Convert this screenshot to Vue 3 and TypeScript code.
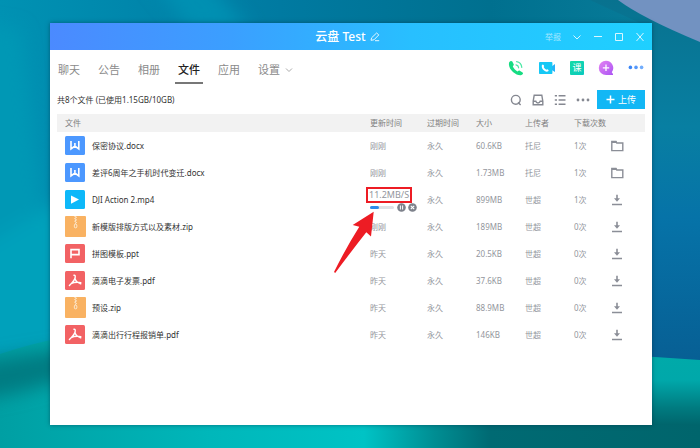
<script setup lang="ts">
import { ref } from 'vue'

type Kind = 'word' | 'video' | 'zip' | 'ppt' | 'pdf'

interface FileRow {
  kind: Kind
  name: string
  updated: string
  size: string
  uploader: string
  downloads: number
  action: 'open' | 'download'
  speed?: string
  progress?: number
}

const tabs = ['聊天', '公告', '相册', '文件', '应用', '设置']
const activeTab = ref('文件')

const files: FileRow[] = [
  { kind: 'word', name: '保密协议.docx', updated: '刚刚', size: '60.6KB', uploader: '托尼', downloads: 1, action: 'open' },
  { kind: 'word', name: '差评6周年之手机时代变迁.docx', updated: '刚刚', size: '1.73MB', uploader: '托尼', downloads: 1, action: 'open' },
  { kind: 'video', name: 'DJI Action 2.mp4', updated: '', size: '899MB', uploader: '世超', downloads: 1, action: 'download', speed: '11.2MB/S', progress: 38 },
  { kind: 'zip', name: '新模版排版方式以及素材.zip', updated: '刚刚', size: '189MB', uploader: '世超', downloads: 0, action: 'download' },
  { kind: 'ppt', name: '拼图模板.ppt', updated: '昨天', size: '20.5KB', uploader: '世超', downloads: 0, action: 'download' },
  { kind: 'pdf', name: '滴滴电子发票.pdf', updated: '昨天', size: '37.6KB', uploader: '世超', downloads: 0, action: 'download' },
  { kind: 'zip', name: '预设.zip', updated: '昨天', size: '88.9MB', uploader: '世超', downloads: 0, action: 'download' },
  { kind: 'pdf', name: '滴滴出行行程报销单.pdf', updated: '昨天', size: '146KB', uploader: '世超', downloads: 0, action: 'download' },
]
</script>

<template>
  <div class="desktop">
    <svg class="wallpaper" viewBox="0 0 700 448" preserveAspectRatio="none" aria-hidden="true">
      <defs>
        <linearGradient id="wall" x1="0" y1="0" x2="1" y2="0">
          <stop offset="0" stop-color="#0092b3" />
          <stop offset="0.18" stop-color="#0087ac" />
          <stop offset="0.4" stop-color="#007aa1" />
          <stop offset="0.7" stop-color="#00708f" />
          <stop offset="1" stop-color="#0a7f9c" />
        </linearGradient>
        <linearGradient id="cloth" x1="0" y1="0" x2="0" y2="1">
          <stop offset="0" stop-color="#08728f" />
          <stop offset="0.35" stop-color="#087fa2" />
          <stop offset="0.6" stop-color="#0673a8" />
          <stop offset="1" stop-color="#075f94" />
        </linearGradient>
        <linearGradient id="floor" x1="0" y1="0" x2="1" y2="0">
          <stop offset="0" stop-color="#009fa3" />
          <stop offset="0.3" stop-color="#00b7ba" />
          <stop offset="0.52" stop-color="#00c3c5" />
          <stop offset="0.62" stop-color="#008e93" />
          <stop offset="0.7" stop-color="#006a73" />
          <stop offset="1" stop-color="#00656c" />
        </linearGradient>
        <linearGradient id="fold" x1="0" y1="0" x2="0" y2="1">
          <stop offset="0" stop-color="#00aaa9" />
          <stop offset="0.35" stop-color="#00a8aa" />
          <stop offset="0.75" stop-color="#007b80" />
          <stop offset="1" stop-color="#00656c" />
        </linearGradient>
        <filter id="soft" x="-50%" y="-50%" width="200%" height="200%">
          <feGaussianBlur stdDeviation="9" />
        </filter>
      </defs>
      <rect width="700" height="448" fill="url(#wall)" />
      <g filter="url(#soft)">
        <path d="M-40 20L20 30L62 370H-40Z" fill="#0098b5" />
        <path d="M150 -20H205L250 30H190Z" fill="#0090b2" />
        <path d="M-40 260L60 200V360H-40Z" fill="#02a1bb" />
      </g>
      <path d="M590 0H625L700 42V362L640 357V23Z" fill="url(#cloth)" />
      <path d="M618 0Q642 18 700 42V0Z" fill="#7292c1" />
      <path d="M0 354Q30 344 60 338V420H700V448H0Z" fill="url(#floor)" />
      <g filter="url(#soft)">
        <path d="M-30 364L80 346V375L20 392L-30 402Z" fill="#007b82" />
      </g>
      <path d="M640 356L700 360V425H640Z" fill="url(#fold)" />
    </svg>

    <main class="window">
      <header class="titlebar">
        <span></span>
        <h1 class="title">
          云盘 Test
          <button class="plain" aria-label="编辑名称">
            <svg width="10" height="10" viewBox="0 0 10 10" fill="none" stroke="#e4f7ff" stroke-width="1">
              <path d="M1 8.3L1.6 5.8L6.6 1L8.8 2.9L4 7.8L1 8.3ZM5 8.7H9.2" />
            </svg>
          </button>
        </h1>
        <div class="controls">
          <button class="plain report">举报</button>
          <button class="plain" aria-label="更多">
            <svg width="10" height="10" viewBox="0 0 10 10"><path d="M1.5 3.5L5 7L8.5 3.5" /></svg>
          </button>
          <button class="plain" aria-label="最小化">
            <svg width="10" height="10" viewBox="0 0 10 10"><path d="M1 4.5H9" /></svg>
          </button>
          <button class="plain" aria-label="最大化">
            <svg width="10" height="10" viewBox="0 0 10 10"><path d="M1.5 1.5H8.5V8.5H1.5Z" /></svg>
          </button>
          <button class="plain" aria-label="关闭">
            <svg width="10" height="10" viewBox="0 0 10 10"><path d="M1.5 1L8.5 9M8.5 1L1.5 9" /></svg>
          </button>
        </div>
      </header>

      <div class="navbar">
        <nav class="tabs">
          <button
            v-for="tab in tabs"
            :key="tab"
            class="plain tab"
            :class="{ active: tab === activeTab }"
            @click="activeTab = tab"
          >
            {{ tab }}
            <svg v-if="tab === '设置'" width="8" height="8" viewBox="0 0 8 8" fill="none" stroke="#aaa">
              <path d="M1 2.5L4 5.5L7 2.5" />
            </svg>
          </button>
        </nav>
        <div class="apps">
          <button class="plain" aria-label="语音通话">
            <svg width="16" height="16" viewBox="0 0 16 16">
              <path d="M1.2 2.2C2.2.7 3.6.5 4.3 1.5L5.7 4.2C6.1 5 5.4 5.6 4.8 6.3C5.4 8.2 7.6 10.7 9.6 11.6C10.4 10.9 11 10.3 11.8 10.8L14.6 12.4C15.6 13.2 14.7 14.6 13.4 15.1C9.2 16.5 -1 9.2 1.2 2.2Z" fill="#16dc82" />
              <path d="M8 4.8Q10.3 5.2 10.6 7.8M8.6 1.6Q13.2 2.2 13.8 7.4" fill="none" stroke="#4be8a5" stroke-width="1.2" stroke-linecap="round" />
            </svg>
          </button>
          <button class="plain" aria-label="视频通话">
            <svg width="18" height="16" viewBox="0 0 18 16">
              <path d="M13 7L17 4V12L13 9.5Z" fill="#25b2fa" />
              <rect x="1" y="2" width="13.4" height="12" rx="0.8" fill="#16c8f5" />
              <path d="M4 5C4.9 4 5.5 4.4 6.2 6L5.7 7.1C6.2 8.3 7 9.1 8.2 9.7L9.3 9.2C10.7 10 11 10.5 10.2 11.3C7.5 13 2.6 8.4 4 5Z" fill="#fff" />
            </svg>
          </button>
          <button class="plain lesson">课</button>
          <button class="plain" aria-label="添加应用">
            <svg width="16" height="16" viewBox="0 0 16 16">
              <defs>
                <linearGradient id="violet" x1="0" y1="0" x2="1" y2="1">
                  <stop offset="0" stop-color="#e483f2" />
                  <stop offset="1" stop-color="#ab55f4" />
                </linearGradient>
              </defs>
              <path d="M8 .7A7.2 7.2 0 0 1 13.8 12.2L15 13.9V15.1H8A7.2 7.2 0 0 1 8 .7Z" fill="url(#violet)" />
              <path d="M8 4.6V11M4.8 7.8H11.2" stroke="#fff" stroke-width="1.3" />
            </svg>
          </button>
          <button class="plain" aria-label="更多应用">
            <svg width="16" height="16" viewBox="0 0 16 16">
              <circle cx="2.4" cy="7.4" r="1.8" fill="#3b86f7" />
              <circle cx="8" cy="7.4" r="1.8" fill="#5598fa" />
              <circle cx="13.6" cy="7.4" r="1.8" fill="#72adfc" />
            </svg>
          </button>
        </div>
      </div>

      <section class="content">
        <div class="toolbar">
          <p class="summary">共8个文件 (已使用1.15GB/10GB)</p>
          <div class="tools">
            <button class="plain" aria-label="搜索">
              <svg width="12" height="12" viewBox="0 0 12 12"><circle cx="5.8" cy="5.8" r="4.4" /><path d="M8 8.3L10.6 11" /></svg>
            </button>
            <button class="plain" aria-label="收件箱">
              <svg width="12" height="12" viewBox="0 0 12 12"><path d="M1.2 7.2L2.2 1.2H9.8L10.8 7.2V10.8H1.2ZM1.2 7.2H3.8Q4.2 9 6 9Q7.8 9 8.2 7.2H10.8" /></svg>
            </button>
            <button class="plain" aria-label="列表视图">
              <svg width="12" height="12" viewBox="0 0 12 12"><path d="M0.8 1.8H3M4.6 1.8H11.5M0.8 6H3M4.6 6H11.5M0.8 10.2H3M4.6 10.2H11.5" stroke-width="1.6" /></svg>
            </button>
            <button class="plain" aria-label="更多操作">
              <svg class="dots" width="14" height="12" viewBox="0 0 14 12">
                <circle cx="2" cy="6" r="1.4" /><circle cx="7" cy="6" r="1.4" /><circle cx="12" cy="6" r="1.4" />
              </svg>
            </button>
            <button class="upload">
              <svg width="9" height="9" viewBox="0 0 9 9"><path d="M4.5 0.5V8.5M0.5 4.5H8.5" stroke="#fff" stroke-width="1.5" /></svg>
              上传
            </button>
          </div>
        </div>

        <table class="files">
          <colgroup>
            <col />
            <col class="col-updated" />
            <col class="col-meta" />
            <col class="col-meta" />
            <col class="col-meta" />
            <col class="col-count" />
            <col class="col-action" />
          </colgroup>
          <thead>
            <tr>
              <th>文件</th>
              <th>更新时间</th>
              <th>过期时间</th>
              <th>大小</th>
              <th>上传者</th>
              <th>下载次数</th>
              <td></td>
            </tr>
          </thead>
          <tbody>
            <tr v-for="file in files" :key="file.name">
              <td>
                <div class="file">
                  <span class="badge">
                    <svg v-if="file.kind === 'word'" width="20" height="20" viewBox="0 0 20 20">
                      <rect width="20" height="19" rx="1.5" fill="#4c98ff" />
                      <path d="M6 5V13L9.9 10L13.8 13V5M9.9 7V10" fill="none" stroke="#fff" stroke-width="1.6" />
                    </svg>
                    <svg v-else-if="file.kind === 'video'" width="20" height="20" viewBox="0 0 20 20">
                      <rect width="20" height="19" rx="1.5" fill="#0db8f9" />
                      <path d="M6 5.4L14 9.6L6 13.8Z" fill="#fff" />
                    </svg>
                    <svg v-else-if="file.kind === 'zip'" width="21" height="21" viewBox="0 0 21 21">
                      <rect width="21" height="21" rx="1" fill="#f9b262" />
                      <path d="M9.2 0L11.6 1.3L9.6 2.6L11.6 3.9L9.6 5.2L11.6 6.5L9.8 7.8" fill="none" stroke="#fdebd3" stroke-width="1" />
                      <rect x="9.4" y="8.2" width="2.4" height="3.6" rx="1" fill="none" stroke="#fdebd3" stroke-width="1" />
                    </svg>
                    <svg v-else-if="file.kind === 'ppt'" width="20" height="20" viewBox="0 0 20 20">
                      <rect width="20" height="19" rx="1.5" fill="#f26264" />
                      <path d="M6 14.3V5.6H14V10.6H6" fill="none" stroke="#fff" stroke-width="1.6" />
                    </svg>
                    <svg v-else width="20" height="20" viewBox="0 0 20 20">
                      <rect width="20" height="19" rx="1.5" fill="#f26264" />
                      <path d="M9 4.3Q10.5 3.9 10.2 6.3Q9.8 9 4.4 14.6M10 7.4Q11 11.6 15.7 12.8M6 12.7Q10 10.7 15.8 11.6" fill="none" stroke="#fff" stroke-width="1.4" stroke-linecap="round" />
                    </svg>
                  </span>
                  <a class="name" href="#">{{ file.name }}</a>
                </div>
              </td>
              <td>
                <div v-if="file.speed" class="transfer">
                  <span class="speed">{{ file.speed }}</span>
                  <div class="progress">
                    <div class="track" role="progressbar" aria-label="上传进度" :aria-valuenow="file.progress">
                      <div class="bar" :style="{ width: file.progress + '%' }"></div>
                    </div>
                    <button class="plain" aria-label="暂停">
                      <svg width="9" height="9" viewBox="0 0 9 9"><circle cx="4.5" cy="4.5" r="4.3" fill="#7e828c" /><path d="M3.4 2.5V6.5M5.6 2.5V6.5" stroke="#fff" /></svg>
                    </button>
                    <button class="plain" aria-label="取消">
                      <svg width="9" height="9" viewBox="0 0 9 9"><circle cx="4.5" cy="4.5" r="4.3" fill="#7e828c" /><path d="M2.8 2.8L6.2 6.2M6.2 2.8L2.8 6.2" stroke="#fff" stroke-width="1.1" /></svg>
                    </button>
                  </div>
                  <svg class="arrow" width="40" height="62" viewBox="0 0 40 62" aria-hidden="true">
                    <path d="M39.7 0.7L18.7 14L25.3 15.7Q13 35 0 61L1.2 62Q16 42 32.3 21.3L37 25.6Z" fill="#ed1c24" />
                  </svg>
                </div>
                <template v-else>{{ file.updated }}</template>
              </td>
              <td>永久</td>
              <td>{{ file.size }}</td>
              <td>{{ file.uploader }}</td>
              <td>{{ file.downloads }}次</td>
              <td class="action">
                <button v-if="file.action === 'open'" class="plain" aria-label="打开文件夹">
                  <svg width="13" height="12" viewBox="0 0 13 12" fill="none" stroke="#8b8e97" stroke-width="1.4">
                    <path d="M0.8 10.6V1.4H5L5.8 3H11.8V10.6Z" /><path d="M0.8 2H5.4" stroke-width="2" />
                  </svg>
                </button>
                <button v-else class="plain" aria-label="下载">
                  <svg width="12" height="12" viewBox="0 0 12 12" fill="none" stroke="#8b8e97" stroke-width="1.6">
                    <path d="M6 0.8V5M1 10.5H11" /><path d="M3 4.2H9L6 7.8Z" fill="#8b8e97" stroke="none" />
                  </svg>
                </button>
              </td>
            </tr>
          </tbody>
        </table>
      </section>
    </main>
  </div>
</template>

<style>
body {
  margin: 0;
}
</style>

<style scoped>
* {
  box-sizing: border-box;
}

.desktop {
  position: relative;
  display: flex;
  min-height: 100vh;
  padding: 23px 48px 23px 50px;
  font-family: "Noto Sans", "Noto Sans CJK SC", sans-serif;
  font-size: 8px;
  color: #333;
  overflow: hidden;
}

.wallpaper {
  position: absolute;
  inset: 0;
  width: 100%;
  height: 100%;
}

.window {
  position: relative;
  flex: 1;
  min-width: 0;
  background: #fff;
  box-shadow: 0 0 4px rgba(0, 40, 60, 0.5);
}

.plain {
  display: flex;
  align-items: center;
  justify-content: center;
  padding: 0;
  border: 0;
  background: none;
  color: inherit;
  font: inherit;
  cursor: pointer;
}

svg {
  display: block;
  flex: none;
}

.titlebar {
  display: grid;
  grid-template-columns: 1fr auto 1fr;
  align-items: center;
  height: 27px;
  padding-right: 7px;
  background: linear-gradient(90deg, #4b8aff 0%, #3b9fff 30%, #28bfff 60%, #1fd0ff 100%);
  color: #fff;
}

.title {
  display: flex;
  align-items: center;
  gap: 4px;
  margin: 0;
  font-size: 12px;
  font-weight: 500;
  line-height: 16px;
}

.controls {
  display: flex;
  justify-content: flex-end;
  align-items: center;
  gap: 11px;
  color: #a9e8ff;
}

.controls svg {
  fill: none;
  stroke: #d9f6ff;
  stroke-width: 1;
}

.report {
  line-height: 10px;
}

.navbar {
  display: flex;
  justify-content: space-between;
  padding: 12px 8px 0 5px;
}

.tabs {
  display: flex;
  gap: 12px;
}

.tab {
  gap: 5px;
  padding: 0 3px 4px;
  border-bottom: 2px solid transparent;
  color: #8a8a8a;
  font-size: 11px;
  line-height: 16px;
}

.tab.active {
  border-bottom-color: #777;
  color: #222;
  font-weight: 500;
}

.apps {
  display: flex;
  gap: 14px;
  height: 12px;
  align-items: center;
}

.lesson {
  width: 14px;
  height: 14px;
  border-radius: 1px;
  background: linear-gradient(135deg, #16dba5, #0ac9c0);
  color: #fff;
  font-size: 9px;
  line-height: 14px;
}

.content {
  padding: 6px 7px 12px;
}

.toolbar {
  display: flex;
  align-items: center;
  justify-content: space-between;
  height: 19px;
}

.summary {
  margin: 0;
}

.tools {
  display: flex;
  align-items: center;
  gap: 10px;
}

.tools svg {
  fill: none;
  stroke: #858891;
  stroke-width: 1.4;
}

.tools .dots {
  fill: #858891;
  stroke: none;
}

.upload {
  display: flex;
  align-items: center;
  justify-content: center;
  gap: 3px;
  width: 48px;
  height: 19px;
  margin-left: -3px;
  padding: 0;
  border: 0;
  background: #12b7f5;
  color: #fff;
  font: inherit;
  font-size: 9px;
  cursor: pointer;
}

.files {
  width: 100%;
  margin-top: 5px;
  border-collapse: collapse;
  table-layout: fixed;
  color: #93969d;
}

.col-updated {
  width: 57px;
}

.col-meta {
  width: 49px;
}

.col-count {
  width: 45px;
}

.col-action {
  width: 34px;
}

.files th,
.files td {
  height: 27px;
  padding: 0 0 0 8px;
  font-weight: 400;
  line-height: 12px;
  text-align: left;
  vertical-align: middle;
  white-space: nowrap;
}

.files thead th,
.files thead td {
  height: 18px;
  background: #f2f2f2;
  color: #808080;
}

.files .action {
  padding: 0;
}

.file {
  display: flex;
  align-items: center;
}

.badge {
  width: 27px;
}

.name {
  color: #333;
  text-decoration: none;
}

.transfer {
  position: relative;
}

.speed {
  display: block;
  width: 46px;
  margin-left: -4px;
  padding-left: 1px;
  border: 2px solid #ed1c24;
  font-size: 9px;
  line-height: 12px;
}

.progress {
  display: flex;
  align-items: center;
  gap: 2px;
  height: 9px;
}

.track {
  width: 24px;
  height: 3px;
  margin-right: 1px;
  border-radius: 2px;
  background: #dfe2e6;
}

.bar {
  height: 100%;
  border-radius: 2px;
  background: #2e8bea;
}

.arrow {
  position: absolute;
  top: 24px;
  left: -36px;
}
</style>
